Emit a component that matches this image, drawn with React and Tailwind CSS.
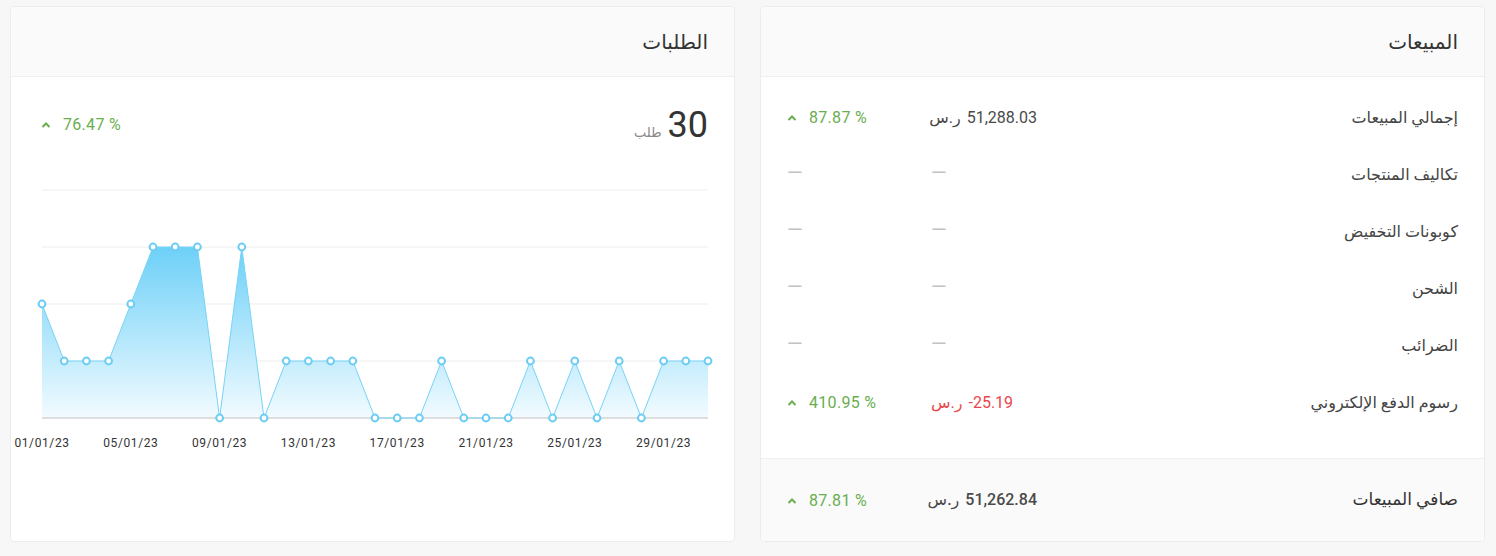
import React from 'react';

const orders = [2, 1, 1, 1, 2, 3, 3, 3, 0, 3, 0, 1, 1, 1, 1, 0, 0, 0, 1, 0, 0, 0, 1, 0, 1, 0, 1, 0, 1, 1, 1];

const salesRows = [
  { label: 'إجمالي المبيعات', value: '51,288.03', pct: '87.87 %' },
  { label: 'تكاليف المنتجات' },
  { label: 'كوبونات التخفيض' },
  { label: 'الشحن' },
  { label: 'الضرائب' },
  { label: 'رسوم الدفع الإلكتروني', value: '-25.19', pct: '410.95 %', negative: true },
];

const Caret = () => (
  <svg width="10" height="8" viewBox="0 0 10 8" className="shrink-0">
    <polyline points="1.5,6 5,2.5 8.5,6" fill="none" stroke="#6aae4f" strokeWidth="2" />
  </svg>
);

const Percent = ({ children }) => (
  <span dir="ltr" className="inline-flex items-center gap-[12px] text-[16px] tracking-[0.3px] text-[#6aae4f]">
    <Caret />
    {children}
  </span>
);

const Dash = () => <span className="text-[20px] leading-none text-[#c2c2c2]">—</span>;

const Money = ({ value, negative, bold }) => (
  <span
    dir="ltr"
    className={`inline-flex items-center gap-[6px] text-[16px] ${negative ? 'text-[#e8474c]' : 'text-[#4a4a4a]'} ${bold ? 'font-medium' : ''}`}
  >
    <span>ر.س</span>
    <span>{value}</span>
  </span>
);

const OrdersChart = () => {
  const x = (i) => 32 + i * 22.2;
  const y = (v) => 238 - v * 57;
  const line = orders.map((v, i) => `${x(i)},${y(v)}`).join(' ');
  const area = `M${x(0)},238 L${line.split(' ').join(' L')} L${x(30)},238 Z`;

  return (
    <svg width="724" height="275" viewBox="0 0 724 275" className="mt-[11px] block">
      <defs>
        <linearGradient id="fillBlue" x1="0" y1="67" x2="0" y2="238" gradientUnits="userSpaceOnUse">
          <stop offset="0" stopColor="#6dd0f8" />
          <stop offset="1" stopColor="#f2fbff" />
        </linearGradient>
      </defs>
      {[10, 67, 124, 181].map((gy) => (
        <line key={gy} x1="32" x2="698" y1={gy} y2={gy} stroke="#eeeeee" strokeWidth="1" />
      ))}
      <path d={area} fill="url(#fillBlue)" />
      <line x1="32" x2="698" y1="238" y2="238" stroke="#dedede" strokeWidth="2" />
      <polyline points={line} fill="none" stroke="#78d3f6" strokeWidth="1" />
      {orders.map((v, i) => (
        <circle key={i} cx={x(i)} cy={y(v)} r="3.4" fill="#fff" stroke="#6ccdf4" strokeWidth="2" />
      ))}
      {orders.map((_, i) =>
        i % 4 === 0 ? (
          <text
            key={i}
            x={x(i)}
            y="267"
            textAnchor="middle"
            fontFamily="Roboto, sans-serif"
            fontSize="12"
            letterSpacing="0.6"
            fill="#333"
          >
            {`${String(i + 1).padStart(2, '0')}/01/23`}
          </text>
        ) : null
      )}
    </svg>
  );
};

export default function App() {
  return (
    <div
      dir="rtl"
      className="min-h-screen bg-[#f7f7f7] pl-[10px] pr-[11px] pt-[6px] pb-[14px]"
      style={{ fontFamily: "Roboto, 'DejaVu Sans', sans-serif" }}
    >
      <div className="grid grid-cols-2 gap-[25px]">
        {/* Sales card */}
        <div className="flex flex-col overflow-hidden rounded-[4px] border border-[#ececec] bg-white">
          <div className="flex h-[70px] items-center border-b border-[#efefef] bg-[#fafafa] px-[26px]">
            <h2 className="text-[20px] text-[#333]">المبيعات</h2>
          </div>
          <div className="pt-[12px] pb-[27px] px-[26px]">
            {salesRows.map((row) => (
              <div key={row.label} className="flex h-[57px] items-center">
                <div className="flex-1 text-[16px] text-[#444]">{row.label}</div>
                <div className="w-[106px] text-left">
                  {row.value ? <Money value={row.value} negative={row.negative} /> : <Dash />}
                </div>
                <div className="w-[144px] text-left">
                  {row.pct ? <Percent>{row.pct}</Percent> : <Dash />}
                </div>
              </div>
            ))}
          </div>
          <div className="flex h-[83px] items-center border-t border-[#efefef] bg-[#fafafa] px-[26px]">
            <div className="flex-1 text-[17px] font-medium text-[#333]">صافي المبيعات</div>
            <div className="w-[106px] text-left">
              <Money value="51,262.84" bold />
            </div>
            <div className="w-[144px] text-left">
              <Percent>87.81 %</Percent>
            </div>
          </div>
        </div>

        {/* Orders card */}
        <div className="flex flex-col overflow-hidden rounded-[4px] border border-[#ececec] bg-white">
          <div className="flex h-[70px] items-center border-b border-[#efefef] bg-[#fafafa] px-[26px]">
            <h2 className="text-[20px] text-[#333]">الطلبات</h2>
          </div>
          <div className="flex h-[92px] items-center justify-between pr-[26px] pl-[30px] pt-[4px]">
            <div className="flex items-baseline gap-[6px]">
              <span className="text-[36px] leading-none text-[#333]">30</span>
              <span className="text-[13px] text-[#888]">طلب</span>
            </div>
            <Percent>76.47 %</Percent>
          </div>
          <OrdersChart />
          <div className="h-[82px]" />
        </div>
      </div>
    </div>
  );
}
